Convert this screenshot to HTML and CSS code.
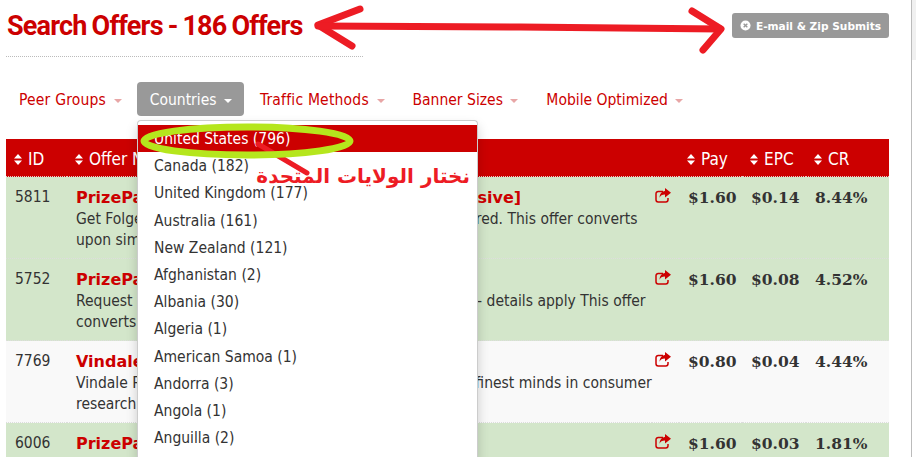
FILE: index.html
```html
<!DOCTYPE html>
<html lang="en">
<head>
  <meta charset="UTF-8" />
  <title>Search Offers</title>
  <link rel="stylesheet" href="styles.css">
</head>
<body>
  <div class="page">
    <div class="top">
      <h1>Search Offers - 186 Offers</h1>
      <a class="submits">
        <svg class="x-icon" viewBox="0 0 12 12"><circle cx="6" cy="6" r="5.5" fill="#fff"/><path d="M4 4l4 4M8 4l-4 4" stroke="#999" stroke-width="1.5"/></svg>
        E-mail &amp; Zip Submits
      </a>
    </div>

    <ul class="filters">
      <li class="wide">Peer Groups <span class="caret"></span></li>
      <li class="active">Countries <span class="caret"></span></li>
      <li class="wide">Traffic Methods <span class="caret"></span></li>
      <li>Banner Sizes <span class="caret"></span></li>
      <li>Mobile Optimized <span class="caret"></span></li>
    </ul>

    <table class="offers">
      <colgroup>
        <col class="w-id"><col class="w-name"><col class="w-share"><col class="w-pay"><col class="w-epc"><col class="w-cr">
      </colgroup>
      <thead>
        <tr>
          <th><svg class="sort" viewBox="0 0 8 11"><path d="M4 0l4 4.4H0zM4 11L0 6.600h8z"/></svg>ID</th>
          <th colspan="2"><svg class="sort" viewBox="0 0 8 11"><path d="M4 0l4 4.4H0zM4 11L0 6.600h8z"/></svg>Offer Name</th>
          <th><svg class="sort" viewBox="0 0 8 11"><path d="M4 0l4 4.4H0zM4 11L0 6.600h8z"/></svg>Pay</th>
          <th><svg class="sort" viewBox="0 0 8 11"><path d="M4 0l4 4.4H0zM4 11L0 6.600h8z"/></svg>EPC</th>
          <th><svg class="sort" viewBox="0 0 8 11"><path d="M4 0l4 4.4H0zM4 11L0 6.600h8z"/></svg>CR</th>
        </tr>
      </thead>
      <tbody>
        <tr class="green">
          <td>5811</td>
          <td class="c-name"><b>PrizePal Folgers Coffees Sample [SOI] [Exclusive]</b>Get Folgers coffee samples when your work email is entered. This offer converts<br>upon simple email submit</td>
          <td class="c-share"><svg class="share" viewBox="0 0 16 15"><path d="M8 3.500H3.200A2.200 2.200 0 0 0 1 5.700v6.100A2.200 2.200 0 0 0 3.200 14h7.600a2.200 2.200 0 0 0 2.200-2.200V10" fill="none" stroke="#c00" stroke-width="1.500"/><path d="M10 0l6 4.700-6 4.700V6.600c-3 0-4.600 .8-5.400 3.200C4.600 5.600 6.800 3.400 10 3z" fill="#c00"/></svg></td>
          <td class="num">$1.60</td>
          <td class="num">$0.14</td>
          <td class="num">8.44%</td>
        </tr>
        <tr class="green">
          <td>5752</td>
          <td class="c-name"><b>PrizePal Gift Card</b>Request your free $50 Costco gift card when you sign up - details apply This offer<br>converts upon email</td>
          <td class="c-share"><svg class="share" viewBox="0 0 16 15"><path d="M8 3.500H3.200A2.200 2.200 0 0 0 1 5.700v6.100A2.200 2.200 0 0 0 3.200 14h7.600a2.200 2.200 0 0 0 2.200-2.200V10" fill="none" stroke="#c00" stroke-width="1.500"/><path d="M10 0l6 4.700-6 4.700V6.600c-3 0-4.600 .8-5.400 3.200C4.600 5.600 6.800 3.400 10 3z" fill="#c00"/></svg></td>
          <td class="num">$1.60</td>
          <td class="num">$0.08</td>
          <td class="num">4.52%</td>
        </tr>
        <tr class="light">
          <td>7769</td>
          <td class="c-name"><b>Vindale Research</b>Vindale Research is a service that works closely with the finest minds in consumer<br>research</td>
          <td class="c-share"><svg class="share" viewBox="0 0 16 15"><path d="M8 3.500H3.200A2.200 2.200 0 0 0 1 5.700v6.100A2.200 2.200 0 0 0 3.200 14h7.600a2.200 2.200 0 0 0 2.200-2.200V10" fill="none" stroke="#c00" stroke-width="1.500"/><path d="M10 0l6 4.700-6 4.700V6.600c-3 0-4.600 .8-5.400 3.200C4.600 5.600 6.800 3.400 10 3z" fill="#c00"/></svg></td>
          <td class="num">$0.80</td>
          <td class="num">$0.04</td>
          <td class="num">4.44%</td>
        </tr>
        <tr class="green">
          <td>6006</td>
          <td class="c-name"><b>PrizePal</b></td>
          <td class="c-share"><svg class="share" viewBox="0 0 16 15"><path d="M8 3.500H3.200A2.200 2.200 0 0 0 1 5.700v6.100A2.200 2.200 0 0 0 3.200 14h7.600a2.200 2.200 0 0 0 2.200-2.200V10" fill="none" stroke="#c00" stroke-width="1.500"/><path d="M10 0l6 4.700-6 4.700V6.600c-3 0-4.600 .8-5.400 3.200C4.600 5.600 6.800 3.400 10 3z" fill="#c00"/></svg></td>
          <td class="num">$1.60</td>
          <td class="num">$0.03</td>
          <td class="num">1.81%</td>
        </tr>
      </tbody>
    </table>
  </div>

  <ul class="menu">
    <li class="selected">United States (796)</li>
    <li>Canada (182)</li>
    <li>United Kingdom (177)</li>
    <li>Australia (161)</li>
    <li>New Zealand (121)</li>
    <li>Afghanistan (2)</li>
    <li>Albania (30)</li>
    <li>Algeria (1)</li>
    <li>American Samoa (1)</li>
    <li>Andorra (3)</li>
    <li>Angola (1)</li>
    <li>Anguilla (2)</li>
  </ul>

  <div class="scrollbar"><div class="thumb"></div></div>

  <!-- hand drawn marks on top of the screenshot -->
  <svg class="marks" viewBox="0 0 916 457">
    <g fill="none" stroke="#ed1c24" stroke-width="7" stroke-linecap="round" stroke-linejoin="round">
      <path d="M360 9L318 25L352 46"/>
      <path d="M318 26L520 27L720 29"/>
      <path d="M692 11L721 29L703 50"/>
      <path d="M258 144L307 173" stroke-width="5"/>
    </g>
    <ellipse cx="247" cy="141" rx="103" ry="14" fill="none" stroke="#b5e61d" stroke-width="7"/>
  </svg>
  <div class="note" dir="rtl" lang="ar">نختار الولايات المتحدة</div>
</body>
</html>
```

FILE: styles.css
```css
html, body {
  margin: 0;
  height: 457px;
  overflow: hidden;
}
body {
  font-family: 'DejaVu Sans Condensed', 'DejaVu Sans', sans-serif;
  font-stretch: condensed;
  font-size: 15.5px;
  color: #333;
  background-color: #fff;
  position: relative;
}
.page {
  width: 883px;
  padding-left: 6px;
}
.top {
  display: flex;
  justify-content: space-between;
  align-items: flex-start;
  height: 82px;
}
h1 {
  font-family: 'Roboto', sans-serif;
  font-stretch: normal;
  font-size: 27px;
  font-weight: 700;
  letter-spacing: -0.8px;
  word-spacing: -1px;
  color: #c00;
  width: 357px;
  height: 45px;
  line-height: 28px;
  margin: 12px 0 0;
  padding-left: 1px;
  box-sizing: border-box;
  white-space: nowrap;
  border-bottom: 1px dotted #bbb;
}
.submits {
  display: flex;
  align-items: center;
  gap: 5px;
  margin-top: 13px;
  height: 25px;
  padding: 0 8px;
  background-color: #999;
  border-radius: 3px;
  color: #fff;
  font-family: 'DejaVu Sans', sans-serif;
  font-stretch: normal;
  font-size: 10.6px;
  font-weight: 700;
}
.x-icon {
  width: 11px;
  height: 11px;
}
.filters {
  display: flex;
  gap: 3px;
  list-style: none;
  margin: 0;
  padding: 0;
  height: 57px;
}
.filters li {
  height: 34px;
  line-height: 36px;
  padding: 0 12px 0 13px;
  border-radius: 4px;
  color: #c00;
}
.filters li.wide {
  letter-spacing: .2px;
}
.filters li.active {
  background-color: #999;
  color: #fff;
}
.caret {
  display: inline-block;
  margin-left: 3px;
  vertical-align: middle;
  border-top: 4px solid #e8a6a6;
  border-left: 4px solid transparent;
  border-right: 4px solid transparent;
}
.active .caret {
  border-top-color: #fff;
}
.offers {
  width: 883px;
  border-collapse: collapse;
  table-layout: fixed;
}
.w-id { width: 61px; }
.w-name { width: 585px; }
.w-share { width: 27px; }
.w-pay { width: 63px; }
.w-epc { width: 64px; }
.w-cr { width: 83px; }
.offers th {
  background-color: #c00;
  color: #fff;
  font-weight: 400;
  font-size: 17px;
  text-align: left;
  height: 35px;
  padding: 2px 0 0 8px;
  border-bottom: 1px dotted #e8c8c8;
  white-space: nowrap;
}
.sort {
  width: 8px;
  height: 11px;
  fill: #fff;
  margin-right: 6px;
}
.offers td {
  vertical-align: top;
  padding: 10px 9px 7px;
  line-height: 21px;
  border-bottom: 1px dotted #ddd;
  height: 64px;
}
.green td { background-color: #d3e6ca; }
.light td { background-color: #f9f9f9; }
.offers td.c-name {
  padding-right: 0;
  white-space: nowrap;
}
.c-name b {
  display: block;
  margin-bottom: 1px;
  font-family: 'DejaVu Sans', sans-serif;
  font-stretch: normal;
  font-size: 16px;
  color: #c00;
}
.offers td.c-share {
  padding: 11px 0 0 3px;
}
.share {
  display: block;
  width: 16px;
  height: 15px;
}
.offers td.num {
  font-family: 'DejaVu Serif', serif;
  font-stretch: normal;
  font-weight: 700;
  font-size: 15.5px;
  padding-right: 0;
  white-space: nowrap;
}
.menu {
  position: absolute;
  left: 137px;
  top: 120px;
  width: 339px;
  height: 337px;
  margin: 0;
  padding: 4px 0 0;
  overflow: hidden;
  list-style: none;
  background-color: #fff;
  border: 1px solid #ccc;
  border-bottom: 0;
  border-radius: 4px 4px 0 0;
  box-shadow: 0 6px 12px rgba(0, 0, 0, .175);
}
.menu li {
  height: 27.2px;
  line-height: 29px;
  padding-left: 16px;
}
.menu li.selected {
  background-color: #c00;
  color: #fff;
}
.scrollbar {
  position: absolute;
  left: 911px;
  top: 0;
  width: 4px;
  height: 457px;
  border-left: 1px solid #bbb;
  background-color: #fff;
}
.thumb {
  height: 60px;
  background-color: #f0f0f0;
}
.marks {
  position: absolute;
  left: 0;
  top: 0;
  width: 916px;
  height: 457px;
}
.note {
  position: absolute;
  left: 250px;
  top: 164px;
  width: 220px;
  font-family: 'DejaVu Sans', sans-serif;
  font-stretch: normal;
  font-size: 20px;
  font-weight: 700;
  color: #ed1c24;
  white-space: nowrap;
}
```
